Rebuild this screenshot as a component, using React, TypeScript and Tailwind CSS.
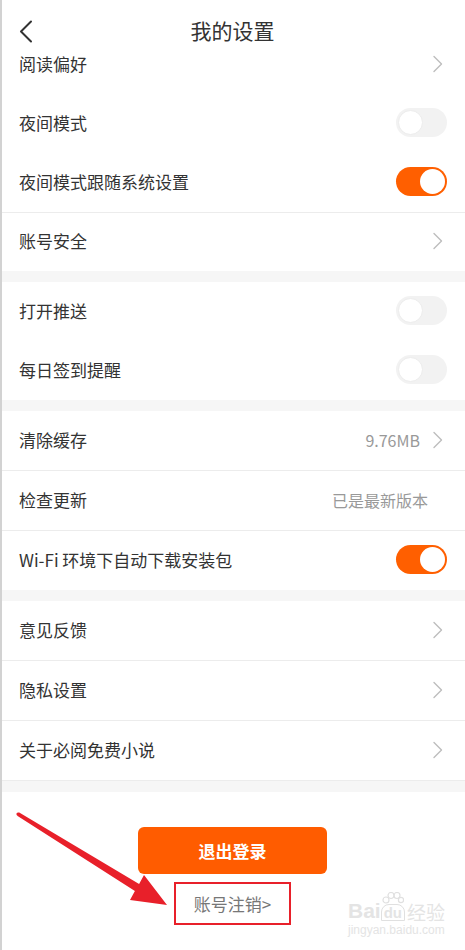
import { ReactNode } from 'react';

const font = { fontFamily: '"Noto Sans CJK SC", "Noto Sans", sans-serif' };

function Chevron() {
  return (
    <svg width="12" height="18" viewBox="0 0 12 18" className="shrink-0 mr-[3px]">
      <path d="M2 1.5 L9.5 9 L2 16.5" fill="none" stroke="#bdbdbd" strokeWidth="1.4" strokeLinecap="round" strokeLinejoin="round" />
    </svg>
  );
}

function Toggle({ on }: { on?: boolean }) {
  if (on) {
    return (
      <div className="w-[51px] h-[29px] rounded-full bg-[#ff5f00] flex items-center justify-end pr-[2px]">
        <div className="w-[25px] h-[25px] rounded-full bg-white" />
      </div>
    );
  }
  return (
    <div className="w-[51px] h-[29px] rounded-full bg-[#f2f2f2] flex items-center pl-[2px]">
      <div className="w-[25px] h-[25px] rounded-full bg-white border border-[#ececec]" />
    </div>
  );
}

function Row({ label, right, line, first, tall }: { label: string; right?: ReactNode; line?: boolean; first?: boolean; tall?: boolean }) {
  const h = first ? 'h-[48px] pb-[13px]' : tall ? 'h-[60px] pb-[2px]' : 'h-[59px] pb-[2px]';
  return (
    <div
      className={`flex items-center justify-between pl-[17px] pr-[18px] bg-white ${h} ${line ? 'border-t border-[#ececec]' : ''}`}
    >
      <span className="text-[17px] text-[#333]">{label}</span>
      {right}
    </div>
  );
}

function Band() {
  return <div className="h-[11px] bg-[#f6f6f6]" />;
}

export default function App() {
  return (
    <div className="relative w-[465px] h-[950px] bg-white border-l-2 border-[#d2d2d2] overflow-hidden" style={font}>
      {/* header */}
      <div className="h-[46px] flex items-center relative">
        <svg width="18" height="24" viewBox="0 0 18 24" className="absolute left-[16px] top-[20px]">
          <path d="M13 1.5 L3 11.5 L13 21.5" fill="none" stroke="#333" strokeWidth="2" strokeLinecap="round" strokeLinejoin="round" />
        </svg>
        <div className="w-full text-center text-[21px] text-[#333] pt-[16px] pr-[2px]">我的设置</div>
      </div>

      <Row first label="阅读偏好" right={<Chevron />} />
      <Row label="夜间模式" right={<Toggle />} />
      <Row label="夜间模式跟随系统设置" right={<Toggle on />} />
      <Row line label="账号安全" right={<Chevron />} />
      <Band />
      <Row label="打开推送" right={<Toggle />} />
      <Row label="每日签到提醒" right={<Toggle />} />
      <Band />
      <Row
        label="清除缓存"
        right={
          <div className="flex items-center gap-[12px]">
            <span className="text-[16px] text-[#999]">9.76MB</span>
            <Chevron />
          </div>
        }
      />
      <Row line tall label="检查更新" right={<span className="text-[16px] text-[#999] pr-[19px]">已是最新版本</span>} />
      <Row line tall label="Wi-Fi 环境下自动下载安装包" right={<Toggle on />} />
      <Band />
      <Row label="意见反馈" right={<Chevron />} />
      <Row line tall label="隐私设置" right={<Chevron />} />
      <Row line tall label="关于必阅免费小说" right={<Chevron />} />
      <div className="border-t border-[#ececec]">
        <Band />
      </div>

      <div className="flex flex-col items-center pt-[35px] pr-[2px]">
        <button className="w-[189px] h-[47px] rounded-[6px] bg-[#ff5c00] text-white text-[17px] font-bold">退出登录</button>
        <div className="mt-[8px] w-[117px] h-[43px] border-2 border-[#e8202a] flex items-center justify-center text-[17px] text-[#777]">
          账号注销&gt;
        </div>
      </div>

      {/* watermark */}
      <div className="absolute left-[346px] top-[892px] flex flex-col items-start text-[#e4e4e4] leading-none">
        <div className="flex items-end">
          <span className="text-[21px] font-bold" style={{ fontFamily: 'Arial, "Liberation Sans", sans-serif' }}>Bai</span>
          <span className="relative flex flex-col items-center">
            <svg width="22" height="12" viewBox="0 0 22 12">
              <circle cx="4" cy="8" r="3" fill="none" stroke="#e0e0e0" strokeWidth="1.2" />
              <circle cx="9" cy="3.5" r="3" fill="none" stroke="#e0e0e0" strokeWidth="1.2" />
              <circle cx="15" cy="3.5" r="3" fill="none" stroke="#e0e0e0" strokeWidth="1.2" />
              <circle cx="19" cy="8" r="2.6" fill="none" stroke="#e0e0e0" strokeWidth="1.2" />
            </svg>
            <span className="text-[15px] font-bold px-[2px] border border-[#e0e0e0] rounded-t-[8px]" style={{ fontFamily: 'Arial, "Liberation Sans", sans-serif' }}>du</span>
          </span>
          <span className="text-[19px] ml-[2px]">经验</span>
        </div>
        <span className="text-[12px] mt-[3px]" style={{ fontFamily: 'Arial, "Liberation Sans", sans-serif' }}>jingyan.baidu.com</span>
      </div>

      {/* annotation arrow */}
      <svg className="absolute -left-[2px] top-0 pointer-events-none" width="465" height="950" viewBox="0 0 465 950">
        <polygon
          points="18.8,812.3 139.1,884.1 144,875 167,905 130,900 134.9,890.9 17.2,815.7"
          fill="#e8202a"
        />
        <circle cx="18" cy="814" r="1.6" fill="#e8202a" />
      </svg>
    </div>
  );
}
